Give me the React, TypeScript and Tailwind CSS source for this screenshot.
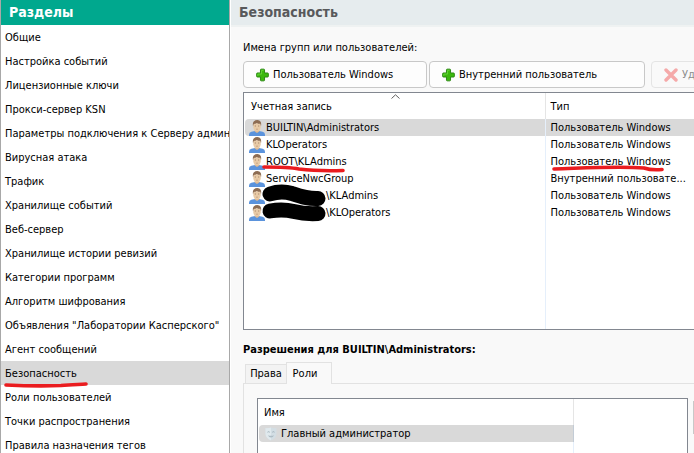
import type { ReactNode } from "react";

const sections = [
  "Общие",
  "Настройка событий",
  "Лицензионные ключи",
  "Прокси-сервер KSN",
  "Параметры подключения к Серверу администрирования",
  "Вирусная атака",
  "Трафик",
  "Хранилище событий",
  "Веб-сервер",
  "Хранилище истории ревизий",
  "Категории программ",
  "Алгоритм шифрования",
  "Объявления \"Лаборатории Касперского\"",
  "Агент сообщений",
  "Безопасность",
  "Роли пользователей",
  "Точки распространения",
  "Правила назначения тегов",
];

type Account = {
  name: string;
  type: string;
  // stroke that covers the domain part of the name
  redaction?: string;
  marked?: boolean;
};

const accounts: Account[] = [
  { name: "BUILTIN\\Administrators", type: "Пользователь Windows" },
  { name: "KLOperators", type: "Пользователь Windows" },
  { name: "ROOT\\KLAdmins", type: "Пользователь Windows", marked: true },
  { name: "ServiceNwcGroup", type: "Внутренний пользовате..." },
  {
    name: "\\KLAdmins",
    type: "Пользователь Windows",
    redaction: "M9 11C15 9 24 8.500 31 10.500 40 13.500 47 16 57 15.500",
  },
  {
    name: "\\KLOperators",
    type: "Пользователь Windows",
    redaction: "M9 11C17 9.500 25 9.500 33 11.500 41 13.500 48 14 57 13.500",
  },
];

function PlusIcon() {
  return (
    <svg width="13" height="14" viewBox="0 0 14 14" className="shrink-0">
      <path
        d="M4.800 1.500Q4.800.7 5.600.7H8.400Q9.200.7 9.200 1.500V4.800H12.500Q13.300 4.800 13.300 5.600V8.400Q13.300 9.200 12.500 9.200H9.200V12.500Q9.200 13.300 8.400 13.300H5.600Q4.800 13.300 4.800 12.500V9.200H1.500Q.7 9.200.7 8.400V5.600Q.7 4.800 1.500 4.800H4.800Z"
        fill="#3cb80e"
        stroke="#27840f"
      />
      <path d="M6 6V2H8M2 8V6H6" fill="none" stroke="#66d63a" />
    </svg>
  );
}

function CrossIcon() {
  return (
    <svg width="14" height="14" viewBox="0 0 14 14" className="shrink-0">
      <path d="M2 2 12 12M12 2 2 12" stroke="#f5a9a9" strokeWidth="3.4" strokeLinecap="round" />
    </svg>
  );
}

function PersonIcon() {
  return (
    <svg width="16" height="16" viewBox="0 0 16 16" className="shrink-0">
      <path d="M0 16V14.500Q0 12.400 2.400 11.800L6 11H10L13.600 11.800Q16 12.400 16 14.500V16Z" fill="#5b93dc" />
      <path d="M5.700 9H10.300V11.400L8 13 5.700 11.400Z" fill="#dcb893" />
      <path d="M4.300 3.200H11.700V7.500Q11.700 9.200 10 10.700 8 12 6 10.700 4.300 9.200 4.300 7.500Z" fill="#e8caa6" />
      <path
        d="M4 6.200Q3.400 2.800 4.700 1.500 5.900.1 8.300.1 10.800.1 11.600 1.800 12.500 3.200 12 6.200L11.300 3.800Q9 3.700 7.800 2.900 6.200 3.800 4.700 3.900Z"
        fill="#8d6c52"
      />
      <path d="M5.800 6H7M9 6H10.200" stroke="#9c7a60" strokeWidth=".8" />
      <path d="M7 9.200H9" stroke="#c59d7c" strokeWidth=".8" />
    </svg>
  );
}

function MaskIcon() {
  return (
    <svg width="12" height="14" viewBox="0 0 12 14" className="shrink-0">
      <path d="M.5 1Q3 1.600 6 .5 9 1.600 11.500 1V7Q11.200 11 6 13.500.8 11 .5 7Z" fill="#d3dee4" />
      <path d="M.5 1Q3 1.600 6 .5V13.500Q.8 11 .5 7Z" fill="#e0e9ed" />
      <path d="M2.500 5.200Q3.600 4.200 4.700 5.200M7.300 5.200Q8.400 4.200 9.500 5.200" fill="none" stroke="#9fb0b9" />
      <path d="M3 8.200Q6 9.200 9 8.200 8.200 10.600 6 10.600 3.800 10.600 3 8.200Z" fill="#aebdc5" />
    </svg>
  );
}

function Redaction({ d }: { d: string }) {
  return (
    <svg width="66" height="24" viewBox="0 0 66 24" className="absolute -top-1 left-4 z-10">
      <path d={d} fill="none" stroke="#000" strokeWidth="15" strokeLinecap="round" />
    </svg>
  );
}

function RedLine({ className, d, viewBox }: { className: string; d: string; viewBox: string }) {
  return (
    <svg viewBox={viewBox} className={`absolute z-10 ${className}`}>
      <path d={d} fill="none" stroke="#ea1c1f" strokeWidth="3.6" strokeLinecap="round" />
    </svg>
  );
}

function ToolButton({ className, disabled, children }: { className: string; disabled?: boolean; children: ReactNode }) {
  return (
    <button
      type="button"
      disabled={disabled}
      className={`flex h-[27px] shrink-0 items-center gap-1 rounded border border-[#c8c8c8] bg-[#fdfdfd] px-3 whitespace-nowrap disabled:border-[#e4e4e4] disabled:bg-[#f9f9f9] disabled:text-[#8c8c8c] ${className}`}
    >
      {children}
    </button>
  );
}

export default function App() {
  return (
    <div className="flex h-screen overflow-hidden bg-white font-['DejaVu_Sans_Condensed','DejaVu_Sans',sans-serif] text-[11px] leading-4 text-black">
      <nav className="flex w-[230px] shrink-0 flex-col border-x border-[#a8a8a8]">
        <h2 className="h-[25px] shrink-0 bg-[#00a88e] px-2 text-[14px] leading-6 font-bold text-white">Разделы</h2>
        <ul>
          {sections.map((section) => {
            const current = section === "Безопасность";
            return (
              <li key={section} className="relative">
                <a
                  href="#"
                  aria-current={current ? "page" : undefined}
                  className="block h-6 overflow-hidden pt-px pl-1 leading-6 whitespace-nowrap aria-[current=page]:bg-[#d9d9d9]"
                >
                  {section}
                </a>
                {current && (
                  <RedLine
                    className="top-5 left-[2px] h-2 w-[86px]"
                    viewBox="0 0 86 8"
                    d="M3 4C24 5 46 5 58 4.500 68 3.500 76 3.500 83 3"
                  />
                )}
              </li>
            );
          })}
        </ul>
      </nav>

      <main className="ml-px flex min-w-0 flex-1 flex-col bg-[#f9f9f9]">
        <h1 className="h-[27px] shrink-0 border-b-2 border-[#eff2f2] bg-[#e6ecee] px-2 text-[14px] leading-6 font-bold text-[#58595b]">
          Безопасность
        </h1>

        <div className="flex min-h-0 flex-1 flex-col pt-[13px] pl-3">
          <p className="shrink-0">Имена групп или пользователей:</p>

          <div className="mt-[5px] flex shrink-0 gap-[2px] overflow-hidden">
            <ToolButton className="w-[184px]">
              <PlusIcon />
              Пользователь Windows
            </ToolButton>
            <ToolButton className="w-[216px]">
              <PlusIcon />
              Внутренний пользователь
            </ToolButton>
            <ToolButton className="ml-1 w-[100px]" disabled>
              <CrossIcon />
              Удалить
            </ToolButton>
          </div>

          <div className="mt-1 h-[238px] shrink-0 border border-r-0 border-[#828790] bg-white">
            <table className="h-full w-full table-fixed">
              <colgroup>
                <col className="w-[301px]" />
                <col />
              </colgroup>
              <thead>
                <tr className="h-[26px] text-left">
                  <th className="relative border-r border-[#e5e5e5] pt-px pl-[7px] font-normal">
                    Учетная запись
                    <svg width="9" height="5" viewBox="0 0 9 5" className="absolute top-px left-[147px]">
                      <path d="M.5 4.500 4.500.8 8.500 4.500" fill="none" stroke="#606060" />
                    </svg>
                  </th>
                  <th className="pt-px pl-[5px] font-normal">Тип</th>
                </tr>
              </thead>
              <tbody>
                {accounts.map((account, i) => (
                  <tr key={account.name} className="h-[17px]">
                    <td className="border-r border-[#e5effb] p-0 pl-px">
                      <div
                        className={`relative flex h-[17px] items-center gap-px pl-1 ${i === 0 ? "rounded-l-sm bg-[#d9d9d9]" : ""}`}
                      >
                        <PersonIcon />
                        {account.redaction && <Redaction d={account.redaction} />}
                        <span className={account.redaction ? "pl-[60px]" : ""}>{account.name}</span>
                        {account.marked && (
                          <RedLine
                            className="top-3 left-4 h-2 w-[86px]"
                            viewBox="0 0 86 8"
                            d="M3 2C18 2 28 2 38 4 50 5.500 66 6 82 5.500"
                          />
                        )}
                      </div>
                    </td>
                    <td className="p-0">
                      <div
                        className={`relative flex h-[17px] items-center pl-[5px] whitespace-nowrap ${i === 0 ? "bg-[#d9d9d9]" : ""}`}
                      >
                        {account.type}
                        {account.marked && (
                          <RedLine
                            className="top-3 left-1 h-2 w-[116px]"
                            viewBox="0 0 116 8"
                            d="M4 4C36 3 68 1 94 3 100 5 106 5 112 4.500"
                          />
                        )}
                      </div>
                    </td>
                  </tr>
                ))}
                <tr>
                  <td className="border-r border-[#e5effb]" />
                  <td />
                </tr>
              </tbody>
            </table>
          </div>

          <h2 className="mt-3 shrink-0 font-bold">Разрешения для BUILTIN\Administrators:</h2>

          <div role="tablist" className="mt-1 flex shrink-0 items-end pl-[2px]">
            <button type="button" role="tab" aria-selected="false" className="h-[19px] w-[41px] border border-r-0 border-b-0 border-[#e2e2e2] bg-[#f3f3f3]">
              Права
            </button>
            <button type="button" role="tab" aria-selected="true" className="z-10 -mb-px h-[22px] w-[46px] border border-b-0 border-[#e2e2e2] bg-[#f9f9f9] pr-2">
              Роли
            </button>
          </div>

          <div role="tabpanel" className="flex min-h-0 flex-1 gap-[5px] border-t border-l border-[#e2e2e2] pt-[14px] pl-[13px]">
            <div className="min-w-0 flex-1 border border-b-0 border-[#828790] bg-white">
              <table className="h-full w-full table-fixed">
                <colgroup>
                  <col className="w-[315px]" />
                  <col />
                </colgroup>
                <thead>
                  <tr className="h-[26px] text-left">
                    <th className="border-r border-[#e5e5e5] pt-px pl-[6px] font-normal">Имя</th>
                    <th aria-label="Описание" />
                  </tr>
                </thead>
                <tbody>
                  <tr className="h-[17px]">
                    <td className="border-r border-[#c3ccd6] p-0 pl-px">
                      <div className="flex h-[17px] items-center gap-1 rounded-l-sm bg-[#d9d9d9] pl-[6px]">
                        <MaskIcon />
                        Главный администратор
                      </div>
                    </td>
                    <td />
                  </tr>
                  <tr>
                    <td className="border-r border-[#e5effb]" />
                    <td />
                  </tr>
                </tbody>
              </table>
            </div>
            <button type="button" aria-label="Добавить" className="mt-[3px] h-[33px] w-px shrink-0 bg-[#c8c8c8]" />
          </div>
        </div>
      </main>
    </div>
  );
}
